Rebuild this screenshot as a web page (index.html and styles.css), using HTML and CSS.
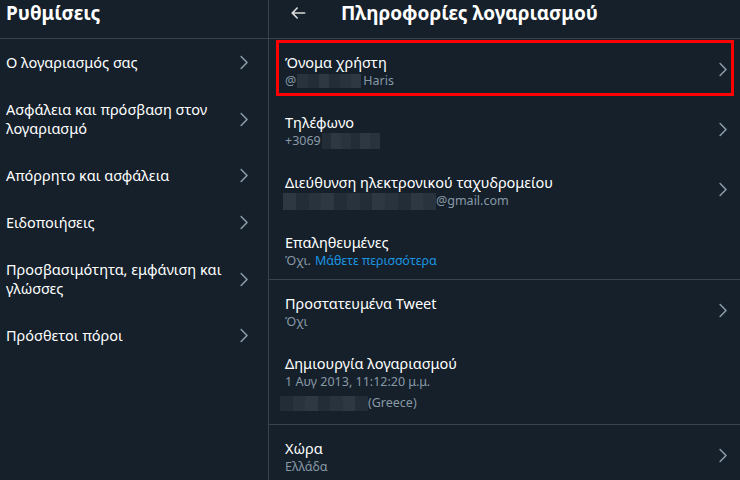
FILE: index.html
```html
<!DOCTYPE html>
<html lang="el">
<head>
<meta charset="utf-8">
<link rel="stylesheet" href="styles.css">
</head>
<body>
<div class="app">
  <aside class="sidebar">
    <header class="head head-left"><h1 class="title">Ρυθμίσεις</h1></header>
    <nav class="menu">
      <a class="menu-item"><span class="menu-label">Ο λογαριασμός σας</span><svg class="chev" viewBox="0 0 24 24"><path d="M17.207 11.293l-7.5-7.5c-.39-.39-1.023-.39-1.414 0s-.39 1.023 0 1.414L15.086 12l-6.793 6.793c-.39.39-.39 1.023 0 1.414.195.195.45.293.707.293s.512-.098.707-.293l7.5-7.5c.39-.39.39-1.023 0-1.414z"/></svg></a>
      <a class="menu-item"><span class="menu-label">Ασφάλεια και πρόσβαση στον λογαριασμό</span><svg class="chev" viewBox="0 0 24 24"><path d="M17.207 11.293l-7.5-7.5c-.39-.39-1.023-.39-1.414 0s-.39 1.023 0 1.414L15.086 12l-6.793 6.793c-.39.39-.39 1.023 0 1.414.195.195.45.293.707.293s.512-.098.707-.293l7.5-7.5c.39-.39.39-1.023 0-1.414z"/></svg></a>
      <a class="menu-item"><span class="menu-label">Απόρρητο και ασφάλεια</span><svg class="chev" viewBox="0 0 24 24"><path d="M17.207 11.293l-7.5-7.5c-.39-.39-1.023-.39-1.414 0s-.39 1.023 0 1.414L15.086 12l-6.793 6.793c-.39.39-.39 1.023 0 1.414.195.195.45.293.707.293s.512-.098.707-.293l7.5-7.5c.39-.39.39-1.023 0-1.414z"/></svg></a>
      <a class="menu-item"><span class="menu-label">Ειδοποιήσεις</span><svg class="chev" viewBox="0 0 24 24"><path d="M17.207 11.293l-7.5-7.5c-.39-.39-1.023-.39-1.414 0s-.39 1.023 0 1.414L15.086 12l-6.793 6.793c-.39.39-.39 1.023 0 1.414.195.195.45.293.707.293s.512-.098.707-.293l7.5-7.5c.39-.39.39-1.023 0-1.414z"/></svg></a>
      <a class="menu-item"><span class="menu-label">Προσβασιμότητα, εμφάνιση και γλώσσες</span><svg class="chev" viewBox="0 0 24 24"><path d="M17.207 11.293l-7.5-7.5c-.39-.39-1.023-.39-1.414 0s-.39 1.023 0 1.414L15.086 12l-6.793 6.793c-.39.39-.39 1.023 0 1.414.195.195.45.293.707.293s.512-.098.707-.293l7.5-7.5c.39-.39.39-1.023 0-1.414z"/></svg></a>
      <a class="menu-item"><span class="menu-label">Πρόσθετοι πόροι</span><svg class="chev" viewBox="0 0 24 24"><path d="M17.207 11.293l-7.5-7.5c-.39-.39-1.023-.39-1.414 0s-.39 1.023 0 1.414L15.086 12l-6.793 6.793c-.39.39-.39 1.023 0 1.414.195.195.45.293.707.293s.512-.098.707-.293l7.5-7.5c.39-.39.39-1.023 0-1.414z"/></svg></a>
    </nav>
  </aside>

  <main class="main">
    <header class="head head-right">
      <svg class="back" viewBox="0 0 24 24"><path d="M20 11H7.414l4.293-4.293c.39-.39.39-1.023 0-1.414s-1.023-.39-1.414 0l-6 6c-.39.39-.39 1.023 0 1.414l6 6c.195.195.45.293.707.293s.512-.098.707-.293c.39-.39.39-1.023 0-1.414L7.414 13H20c.553 0 1-.447 1-1s-.447-1-1-1z"/></svg>
      <h1 class="title">Πληροφορίες λογαριασμού</h1>
    </header>

    <section class="group">
      <a class="row highlighted">
        <div class="row-text">
          <div class="row-title">Όνομα χρήστη</div>
          <div class="row-sub">@<span class="mosaic mosaic-user"><i class="m2"></i><i class="m1"></i><i class="m3"></i><i class="m1"></i><i class="m2"></i><i class="m3"></i></span>Haris</div>
        </div>
        <svg class="chev" viewBox="0 0 24 24"><path d="M17.207 11.293l-7.5-7.5c-.39-.39-1.023-.39-1.414 0s-.39 1.023 0 1.414L15.086 12l-6.793 6.793c-.39.39-.39 1.023 0 1.414.195.195.45.293.707.293s.512-.098.707-.293l7.5-7.5c.39-.39.39-1.023 0-1.414z"/></svg>
        <span class="redbox"></span>
      </a>
      <a class="row">
        <div class="row-text">
          <div class="row-title">Τηλέφωνο</div>
          <div class="row-sub">+3069<span class="mosaic mosaic-phone"><i class="m1"></i><i class="m3"></i><i class="m2"></i><i class="m1"></i><i class="m3"></i><i class="m2"></i></span></div>
        </div>
        <svg class="chev" viewBox="0 0 24 24"><path d="M17.207 11.293l-7.5-7.5c-.39-.39-1.023-.39-1.414 0s-.39 1.023 0 1.414L15.086 12l-6.793 6.793c-.39.39-.39 1.023 0 1.414.195.195.45.293.707.293s.512-.098.707-.293l7.5-7.5c.39-.39.39-1.023 0-1.414z"/></svg>
      </a>
      <a class="row">
        <div class="row-text">
          <div class="row-title">Διεύθυνση ηλεκτρονικού ταχυδρομείου</div>
          <div class="row-sub"><span class="mosaic mosaic-mail"><i class="m3"></i><i class="m1"></i><i class="m2"></i><i class="m3"></i><i class="m1"></i><i class="m2"></i><i class="m1"></i><i class="m3"></i><i class="m2"></i><i class="m1"></i><i class="m3"></i><i class="m2"></i></span>@gmail.com</div>
        </div>
        <svg class="chev" viewBox="0 0 24 24"><path d="M17.207 11.293l-7.5-7.5c-.39-.39-1.023-.39-1.414 0s-.39 1.023 0 1.414L15.086 12l-6.793 6.793c-.39.39-.39 1.023 0 1.414.195.195.45.293.707.293s.512-.098.707-.293l7.5-7.5c.39-.39.39-1.023 0-1.414z"/></svg>
      </a>
      <div class="row">
        <div class="row-text">
          <div class="row-title">Επαληθευμένες</div>
          <div class="row-sub">Όχι. <span class="link">Μάθετε περισσότερα</span></div>
        </div>
      </div>
    </section>

    <section class="group">
      <a class="row">
        <div class="row-text">
          <div class="row-title">Προστατευμένα Tweet</div>
          <div class="row-sub">Όχι</div>
        </div>
        <svg class="chev" viewBox="0 0 24 24"><path d="M17.207 11.293l-7.5-7.5c-.39-.39-1.023-.39-1.414 0s-.39 1.023 0 1.414L15.086 12l-6.793 6.793c-.39.39-.39 1.023 0 1.414.195.195.45.293.707.293s.512-.098.707-.293l7.5-7.5c.39-.39.39-1.023 0-1.414z"/></svg>
      </a>
      <div class="row row-tall">
        <div class="row-text">
          <div class="row-title">Δημιουργία λογαριασμού</div>
          <div class="row-sub">1 Αυγ 2013, 11:12:20 μ.μ.</div>
          <div class="row-sub row-sub-extra"><span class="mosaic mosaic-ip"><i class="m1"></i><i class="m2"></i><i class="m3"></i><i class="m1"></i><i class="m2"></i><i class="m3"></i><i class="m1"></i></span>(Greece)</div>
        </div>
      </div>
    </section>

    <section class="group">
      <a class="row">
        <div class="row-text">
          <div class="row-title">Χώρα</div>
          <div class="row-sub">Ελλάδα</div>
        </div>
        <svg class="chev" viewBox="0 0 24 24"><path d="M17.207 11.293l-7.5-7.5c-.39-.39-1.023-.39-1.414 0s-.39 1.023 0 1.414L15.086 12l-6.793 6.793c-.39.39-.39 1.023 0 1.414.195.195.45.293.707.293s.512-.098.707-.293l7.5-7.5c.39-.39.39-1.023 0-1.414z"/></svg>
      </a>
    </section>
  </main>
</div>
</body>
</html>
```
FILE: styles.css
```css
* { box-sizing: border-box; }
html, body { margin: 0; padding: 0; }
body {
  width: 740px;
  height: 480px;
  overflow: hidden;
  background: #15202b;
  color: #ffffff;
  font-family: "Noto Sans", "Open Sans", sans-serif;
  font-size: 14.5px;
  line-height: 20px;
}
.app { display: flex; height: 480px; }

.sidebar {
  width: 269px;
  flex: none;
  border-right: 1px solid #38444d;
}
.main { flex: 1; min-width: 0; }

.head {
  height: 39px;
  border-bottom: 1px solid #38444d;
  display: flex;
  align-items: flex-start;
  padding-top: 1px;
}
.head-left { padding-left: 6px; }
.head-right { padding-left: 19px; gap: 33px; }
.title {
  margin: 0;
  font-size: 19px;
  font-weight: 700;
  line-height: 24px;
  color: #ffffff;
}
.back {
  width: 20px;
  height: 20px;
  margin-top: 2px;
  fill: #d9d9d9;
  flex: none;
}

.menu { display: flex; flex-direction: column; }
.menu-item {
  display: flex;
  align-items: center;
  gap: 8px;
  padding: 14px 15px 14px 6px;
  line-height: 19px;
  color: #ffffff;
}
.menu-label { flex: 1; }

.chev {
  width: 19px;
  height: 19px;
  fill: #8899a6;
  flex: none;
}

.group { border-bottom: 1px solid #38444d; }
.group:last-child { border-bottom: none; }

.row {
  position: relative;
  display: flex;
  align-items: center;
  height: 60px;
  padding: 0 8px 0 16px;
  color: #ffffff;
}
.row-text {
  flex: 1;
  align-self: flex-start;
  padding-top: 13px;
}
.row-tall { height: 84px; }
.row-title { line-height: 20px; }
.row-sub {
  font-size: 12.5px;
  line-height: 18px;
  color: #8899a6;
  display: flex;
  align-items: center;
}
.row-sub-extra { margin-top: 3px; }
.link { color: #1b95e0; margin-left: 4px; }

.redbox {
  position: absolute;
  top: 1px;
  left: 7px;
  right: 6px;
  bottom: 3px;
  border: 3px solid #ff0000;
  pointer-events: none;
}

.mosaic { display: inline-flex; }
.mosaic i { display: block; flex: 1; height: 100%; }
.m1 { background: #222d38; }
.m2 { background: #28333e; }
.m3 { background: #2d3843; }
.mosaic-user { width: 64px; height: 14px; margin: 0 2px 0 1px; }
.mosaic-phone { width: 58px; height: 16px; margin-left: 1px; }
.mosaic-mail { width: 153px; height: 17px; margin-left: -2px; }
.mosaic-ip { width: 88px; height: 15px; margin-left: -5px; }
```
